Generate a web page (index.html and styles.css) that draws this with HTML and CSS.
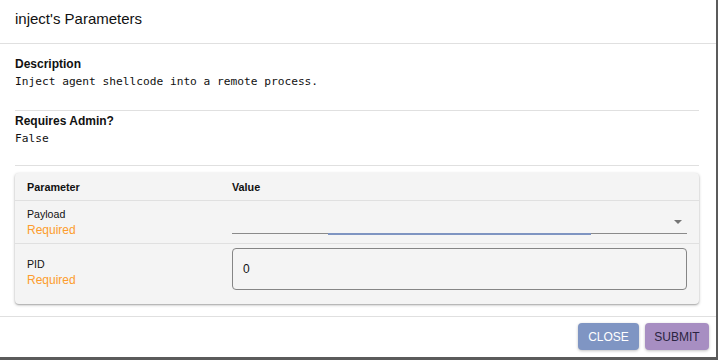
FILE: index.html
```html
<!DOCTYPE html>
<html lang="en">
<head>
	<meta charset="UTF-8">
	<title>inject's Parameters</title>
	<link rel="stylesheet" href="styles.css">
</head>
<body>
	<div class="dialog">
		<header class="title">inject's Parameters</header>
		<section class="content">
			<div class="block">
				<h4>Description</h4>
				<pre>Inject agent shellcode into a remote process.</pre>
			</div>
			<div class="block">
				<h4>Requires Admin?</h4>
				<pre>False</pre>
			</div>
			<div class="card">
				<div class="row head">
					<div class="name">Parameter</div>
					<div class="value">Value</div>
				</div>
				<div class="row">
					<div class="name">
						<div class="label">Payload</div>
						<div class="req">Required</div>
					</div>
					<div class="value">
						<div class="select">
							<span class="arrow"></span>
							<span class="focus"></span>
						</div>
					</div>
				</div>
				<div class="row last">
					<div class="name">
						<div class="label">PID</div>
						<div class="req">Required</div>
					</div>
					<div class="value">
						<div class="input">0</div>
					</div>
				</div>
			</div>
		</section>
		<footer class="actions">
			<button class="btn close">Close</button>
			<button class="btn submit">Submit</button>
		</footer>
	</div>
</body>
</html>
```

FILE: styles.css
```css
html, body {
	margin: 0;
	padding: 0;
	background: #5b5b5b;
	height: 360px;
	overflow: hidden;
}
.dialog {
	width: 716px;
	height: 357px;
	background: #fff;
	font-family: "Liberation Sans", Arial, sans-serif;
	color: #111;
	display: flex;
	flex-direction: column;
}
/* title */
.dialog .title {
	border-bottom: 1px solid #e0e0e0;
	padding: 0 15px;
	font-size: 15px;
	line-height: 38px;
	box-sizing: border-box;
	height: 44px;
}
/* content */
.dialog .content {
	padding: 0 17px 0 15px;
	flex: 1;
}
.content .block {
	border-bottom: 1px solid #e0e0e0;
}
.content .block:first-child {
	padding-top: 13px;
	height: 53px;
}
.content .block:nth-child(2) {
	padding-top: 3px;
	height: 51px;
}
.content h4 {
	margin: 0;
	font-size: 12px;
	line-height: 15px;
	font-weight: bold;
}
.content pre {
	margin: 0;
	font-family: "DejaVu Sans Mono", monospace;
	font-size: 11.2px;
	line-height: 19px;
}
/* table card */
.card {
	margin-top: 7px;
	background: #f4f4f4;
	border-radius: 4px;
	box-shadow: 0 1px 3px rgba(0,0,0,.3), 0 1px 1px rgba(0,0,0,.12);
}
.card .row {
	display: flex;
	border-bottom: 1px solid #e0e0e0;
	padding: 0 12px;
}
.card .row.last {
	border-bottom: none;
}
.card .row .name {
	width: 205px;
}
.card .row .value {
	flex: 1;
}
.card .row.head {
	height: 27px;
	align-items: center;
	font-size: 10.8px;
	font-weight: bold;
}
.card .row:nth-child(2) {
	height: 42px;
}
.card .row:nth-child(2) .name {
	padding-top: 6px;
}
.card .row.last {
	height: 60px;
	align-items: flex-start;
}
.card .row.last .name {
	padding-top: 13px;
}
.card .label {
	font-size: 10.6px;
	line-height: 14px;
}
.card .req {
	font-size: 12px;
	line-height: 19px;
	color: #fd9c2d;
}
/* select */
.select {
	position: relative;
	height: 32px;
	border-bottom: 1px solid #8a8a8a;
}
.select .arrow {
	position: absolute;
	right: 5px;
	top: 19px;
	border-left: 4px solid transparent;
	border-right: 4px solid transparent;
	border-top: 4px solid #757575;
}
.select .focus {
	position: absolute;
	left: 96px;
	width: 263px;
	bottom: -2px;
	height: 2px;
	background: #7e94c1;
}
/* input */
.input {
	margin-top: 4px;
	height: 42px;
	box-sizing: border-box;
	border: 1px solid #858585;
	border-radius: 4px;
	padding: 0 10px;
	font-size: 12px;
	line-height: 40px;
}
/* footer */
.actions {
	border-top: 1px solid #e0e0e0;
	height: 41px;
	display: flex;
	justify-content: flex-end;
	align-items: flex-start;
	padding: 6px 7px 0 0;
	gap: 6px;
	box-sizing: border-box;
}
.btn {
	height: 27px;
	border: none;
	border-radius: 4px;
	font-family: "Liberation Sans", Arial, sans-serif;
	font-size: 12px;
	text-transform: uppercase;
	box-shadow: 0 1px 3px rgba(0,0,0,.25);
	padding: 0;
}
.btn.close {
	width: 61px;
	background: #7f95c3;
	color: #fff;
}
.btn.submit {
	width: 64px;
	background: #a78ec2;
	color: #2a2440;
}
```
